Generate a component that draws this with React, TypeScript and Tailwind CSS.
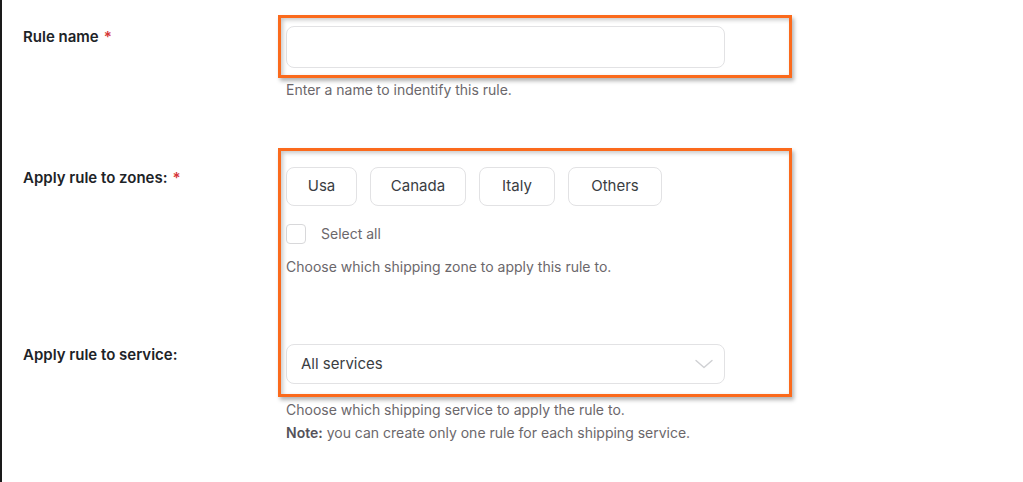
import React from "react";

const Req = () => <span className="ml-[5px] text-[#d63638]">*</span>;

export default function App() {
  const zones = [
    { name: "Usa", w: "w-[71px]" },
    { name: "Canada", w: "w-[96px]" },
    { name: "Italy", w: "w-[76px]" },
    { name: "Others", w: "w-[94px]" },
  ];
  return (
    <div className="relative h-[482px] w-[1023px] overflow-hidden border-l-2 border-[#1a1a1a] bg-white font-['Inter','Liberation_Sans',sans-serif] text-[#1d2327]">
      <div className="pl-[21px] pt-[26px]">
        {/* Row 1 */}
        <div className="grid grid-cols-[263px_439px]">
          <div className="text-[15px] font-semibold leading-[22px]">
            Rule name
            <Req />
          </div>
          <div>
            <div className="h-[42px] rounded-[8px] border border-[#e2e2e4] bg-white" />
            <p className="mt-[14px] text-[14px] leading-[16px] text-[#6b676b]">
              Enter a name to indentify this rule.
            </p>
          </div>
        </div>

        {/* Row 2 */}
        <div className="mt-[69px] grid grid-cols-[263px_439px]">
          <div className="text-[15px] font-semibold leading-[22px]">
            Apply rule to zones:
            <Req />
          </div>
          <div>
            <div className="flex gap-[13px]">
              {zones.map((z) => (
                <div
                  key={z.name}
                  className={`${z.w} flex h-[39px] items-center justify-center rounded-[8px] border border-[#e2e2e4] bg-white text-[15px] text-[#3a3d42]`}
                >
                  {z.name}
                </div>
              ))}
            </div>
            <div className="mt-[18px] flex items-center">
              <div className="h-[20px] w-[20px] rounded-[4px] border border-[#d8d8da] bg-white" />
              <span className="ml-[15px] text-[14px] leading-[20px] text-[#6b676b]">Select all</span>
            </div>
            <p className="mt-[15px] text-[14px] leading-[16px] text-[#6b676b]">
              Choose which shipping zone to apply this rule to.
            </p>
          </div>
        </div>

        {/* Row 3 */}
        <div className="mt-[69px] grid grid-cols-[263px_439px]">
          <div className="text-[15px] font-semibold leading-[22px]">Apply rule to service:</div>
          <div>
            <div className="flex h-[40px] items-center justify-between rounded-[8px] border border-[#e2e2e4] bg-white pl-[14px] pr-[11px]">
              <span className="text-[15px] text-[#3a3d42]">All services</span>
              <svg width="18" height="10" viewBox="0 0 18 10" fill="none">
                <path d="M1 1.5 L9 8.5 L17 1.5" stroke="#cfd0d3" strokeWidth="1.4" strokeLinecap="round" strokeLinejoin="round" />
              </svg>
            </div>
            <div className="mt-[14px] text-[14px] leading-[23px] text-[#6b676b]">
              <p>Choose which shipping service to apply the rule to.</p>
              <p>
                <span className="font-semibold text-[#55525a]">Note:</span> you can create only one rule for each shipping service.
              </p>
            </div>
          </div>
        </div>
      </div>

      {/* Annotation boxes */}
      <div className="pointer-events-none absolute left-[276px] top-[15px] h-[63px] w-[514px] border-[3px] border-[#fb6a1c] shadow-[inset_2px_2px_4px_rgba(0,0,0,0.22),2px_3px_4px_rgba(0,0,0,0.3)]" />
      <div className="pointer-events-none absolute left-[276px] top-[148px] h-[249px] w-[514px] border-[3px] border-[#fb6a1c] shadow-[inset_2px_2px_4px_rgba(0,0,0,0.22),2px_3px_4px_rgba(0,0,0,0.3)]" />
    </div>
  );
}
